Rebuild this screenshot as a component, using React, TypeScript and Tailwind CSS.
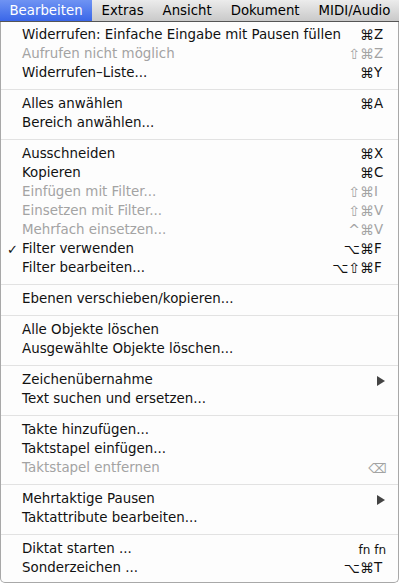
import React from "react";

type Item =
  | { sep: true }
  | {
      sep?: false;
      label: string;
      mods?: string;
      key?: string;
      special?: "submenu" | "delete" | "fn";
      disabled?: boolean;
      checked?: boolean;
    };

const items: Item[] = [
  { label: "Widerrufen: Einfache Eingabe mit Pausen füllen", mods: "⌘", key: "Z" },
  { label: "Aufrufen nicht möglich", mods: "⇧⌘", key: "Z", disabled: true },
  { label: "Widerrufen–Liste...", mods: "⌘", key: "Y" },
  { sep: true },
  { label: "Alles anwählen", mods: "⌘", key: "A" },
  { label: "Bereich anwählen..." },
  { sep: true },
  { label: "Ausschneiden", mods: "⌘", key: "X" },
  { label: "Kopieren", mods: "⌘", key: "C" },
  { label: "Einfügen mit Filter...", mods: "⇧⌘", key: "I", disabled: true },
  { label: "Einsetzen mit Filter...", mods: "⇧⌘", key: "V", disabled: true },
  { label: "Mehrfach einsetzen...", mods: "^⌘", key: "V", disabled: true },
  { label: "Filter verwenden", mods: "⌥⌘", key: "F", checked: true },
  { label: "Filter bearbeiten...", mods: "⌥⇧⌘", key: "F" },
  { sep: true },
  { label: "Ebenen verschieben/kopieren..." },
  { sep: true },
  { label: "Alle Objekte löschen" },
  { label: "Ausgewählte Objekte löschen..." },
  { sep: true },
  { label: "Zeichenübernahme", special: "submenu" },
  { label: "Text suchen und ersetzen..." },
  { sep: true },
  { label: "Takte hinzufügen..." },
  { label: "Taktstapel einfügen..." },
  { label: "Taktstapel entfernen", special: "delete", disabled: true },
  { sep: true },
  { label: "Mehrtaktige Pausen", special: "submenu" },
  { label: "Taktattribute bearbeiten..." },
  { sep: true },
  { label: "Diktat starten ...", special: "fn" },
  { label: "Sonderzeichen ...", mods: "⌥⌘", key: "T" },
];

const menus = ["Extras", "Ansicht", "Dokument", "MIDI/Audio"];

export default function App() {
  return (
    <div
      className="w-[399px] h-[583px] overflow-hidden bg-white relative"
      style={{ fontFamily: '"DejaVu Sans", Verdana, sans-serif' }}
    >
      {/* menu bar */}
      <div className="h-[22px] flex items-stretch bg-gradient-to-b from-[#ececec] to-[#c9c9c9] border-b border-[#555] text-[13.3px] text-black">
        <div className="px-[9.5px] flex items-center text-white bg-gradient-to-b from-[#6f93f3] to-[#3a66e8]">
          Bearbeiten
        </div>
        {menus.map((m) => (
          <div key={m} className="px-[9.5px] flex items-center">
            {m}
          </div>
        ))}
      </div>
      {/* dropdown */}
      <div className="h-[561px] bg-[#fdfdfd] border-x border-b border-[#a8a8a8] rounded-b-[5px] py-[4px] text-[13.4px] text-[#111]">
        {items.map((it, i) =>
          it.sep ? (
            <div key={i} className="h-[12px] flex items-center">
              <div className="h-px w-full bg-[#e2e2e2]" />
            </div>
          ) : (
            <div
              key={i}
              className={
                "h-[19px] flex items-center pl-[21px] pr-[12px] relative " +
                (it.disabled ? "text-[#a3a3a3]" : "")
              }
            >
              {it.checked && (
                <span className="absolute left-[6px] top-0 h-[19px] flex items-center text-[13px] font-bold">
                  ✓
                </span>
              )}
              <span className="flex-1 whitespace-nowrap">{it.label}</span>
              {it.special === "submenu" && (
                <svg width="8" height="10" viewBox="0 0 8 10" className="mr-[1px]">
                  <polygon points="0,0 8,5 0,10" fill="#444" />
                </svg>
              )}
              {it.special === "delete" && (
                <span className="text-[13px] text-[#a3a3a3] mr-[-1px]">⌫</span>
              )}
              {it.special === "fn" && (
                <span className="text-[12px]">fn fn</span>
              )}
              {it.key && (
                <span className="flex items-center">
                  <span className="text-right whitespace-nowrap text-[14px]">{it.mods}</span>
                  <span className="w-[12px]">{it.key}</span>
                </span>
              )}
            </div>
          )
        )}
      </div>
    </div>
  );
}
